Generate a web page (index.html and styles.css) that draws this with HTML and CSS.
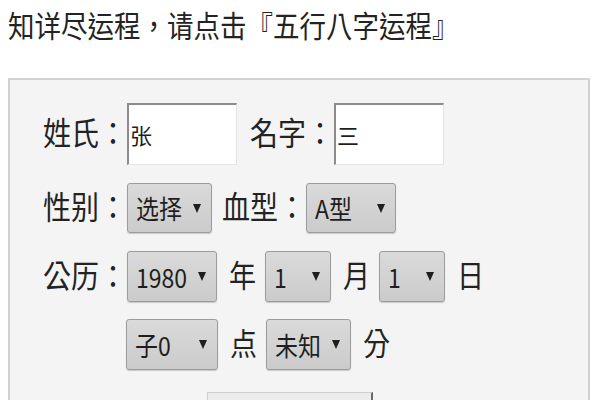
FILE: index.html
```html
<!DOCTYPE html>
<html lang="zh-CN">
<head>
<meta charset="utf-8">
<title>五行八字运程</title>
<link rel="stylesheet" href="styles.css">
</head>
<body>
<p class="title"><span class="st">知详尽运程，请点击『五行八字运程』</span></p>
<form class="panel">
  <div class="row r1">
    <span class="lbl"><span class="st">姓氏：</span></span>
    <span class="inp">张</span>
    <span class="lbl lbl2"><span class="st">名字：</span></span>
    <span class="inp">三</span>
  </div>
  <div class="row r2">
    <span class="lbl"><span class="st">性别：</span></span>
    <span class="sel w85"><span class="txt">选择</span><span class="arr"></span></span>
    <span class="lbl lbl3"><span class="st">血型：</span></span>
    <span class="sel w90"><span class="txt">A型</span><span class="arr"></span></span>
  </div>
  <div class="row r3">
    <span class="lbl"><span class="st">公历：</span></span>
    <span class="sel w90"><span class="txt">1980</span><span class="arr"></span></span>
    <span class="u"><span class="st">年</span></span>
    <span class="sel w66"><span class="txt">1</span><span class="arr"></span></span>
    <span class="u"><span class="st">月</span></span>
    <span class="sel w66"><span class="txt">1</span><span class="arr"></span></span>
    <span class="u"><span class="st">日</span></span>
  </div>
  <div class="row r4">
    <span class="sel w92"><span class="txt">子0</span><span class="arr"></span></span>
    <span class="u"><span class="st">点</span></span>
    <span class="sel w85"><span class="txt">未知</span><span class="arr"></span></span>
    <span class="u"><span class="st">分</span></span>
  </div>
  <div class="btnrow"><span class="btn"></span></div>
</form>
</body>
</html>
```
FILE: styles.css
```css
html, body {
  margin: 0;
  padding: 0;
  overflow: hidden;
  background: #ffffff;
}
body {
  width: 600px;
  height: 400px;
  font-family: "Noto Sans CJK TC", "Noto Sans", sans-serif;
  font-feature-settings: "locl" 0;
  color: #232323;
}
.st {
  display: inline-block;
  transform: scaleY(1.12);
}
.title {
  margin: 0;
  height: 50px;
  line-height: 50px;
  padding-left: 8px;
  font-size: 26.5px;
  white-space: nowrap;
}
.panel {
  margin: 28px 0 0 8px;
  width: 582px;
  height: 400px;
  border: 2px solid #d2d2d2;
  background: #f4f4f4;
  padding: 23px 0 0 33px;
  box-sizing: border-box;
}
.row {
  display: flex;
  align-items: center;
}
.r1 { height: 62px; }
.r2 { height: 50px; margin-top: 18px; }
.r3 { height: 51px; margin-top: 18px; }
.r4 { height: 51px; margin-top: 17px; padding-left: 83px; }
.lbl {
  width: 84px;
  font-size: 28px;
  line-height: 30px;
  padding-bottom: 4px;
  white-space: nowrap;
}
.lbl2 { margin-left: 13px; }
.lbl3 { margin-left: 10px; }
.inp {
  box-sizing: border-box;
  width: 110px;
  height: 62px;
  background: #ffffff;
  border-top: 2px solid #8c8c8c;
  border-left: 2px solid #8c8c8c;
  border-right: 1px solid #e2e2e2;
  border-bottom: 1px solid #e6e6e6;
  font-size: 22px;
  line-height: 58px;
  padding-left: 1px;
  color: #1e1e1e;
}
.sel {
  box-sizing: border-box;
  height: 100%;
  display: flex;
  align-items: center;
  justify-content: space-between;
  padding: 0 10px 0 8px;
  background: linear-gradient(#dadada, #cbcbcb);
  border: 1px solid #9c9c9c;
  border-radius: 3px;
  box-shadow: 0 1px 1px rgba(0, 0, 0, 0.18);
  font-size: 23px;
  color: #1e1e1e;
}
.w66 { width: 66px; }
.w85 { width: 85px; }
.w90 { width: 90px; }
.w92 { width: 92px; }
.txt {
  white-space: nowrap;
  display: inline-block;
  transform: scaleY(1.12);
}
.arr {
  width: 0;
  height: 0;
  border-left: 4.5px solid transparent;
  border-right: 4.5px solid transparent;
  border-top: 9px solid #1e1e1e;
}
.u {
  font-size: 27px;
  line-height: 30px;
  padding-bottom: 4px;
  margin: 0 9px 0 12px;
}
.btnrow {
  margin-top: 22px;
  padding-left: 164px;
}
.btn {
  display: block;
  box-sizing: border-box;
  width: 166px;
  height: 50px;
  background: #ececec;
  border: 1px solid #d0d0d0;
  border-right: 2px solid #6a6a6a;
}
```
